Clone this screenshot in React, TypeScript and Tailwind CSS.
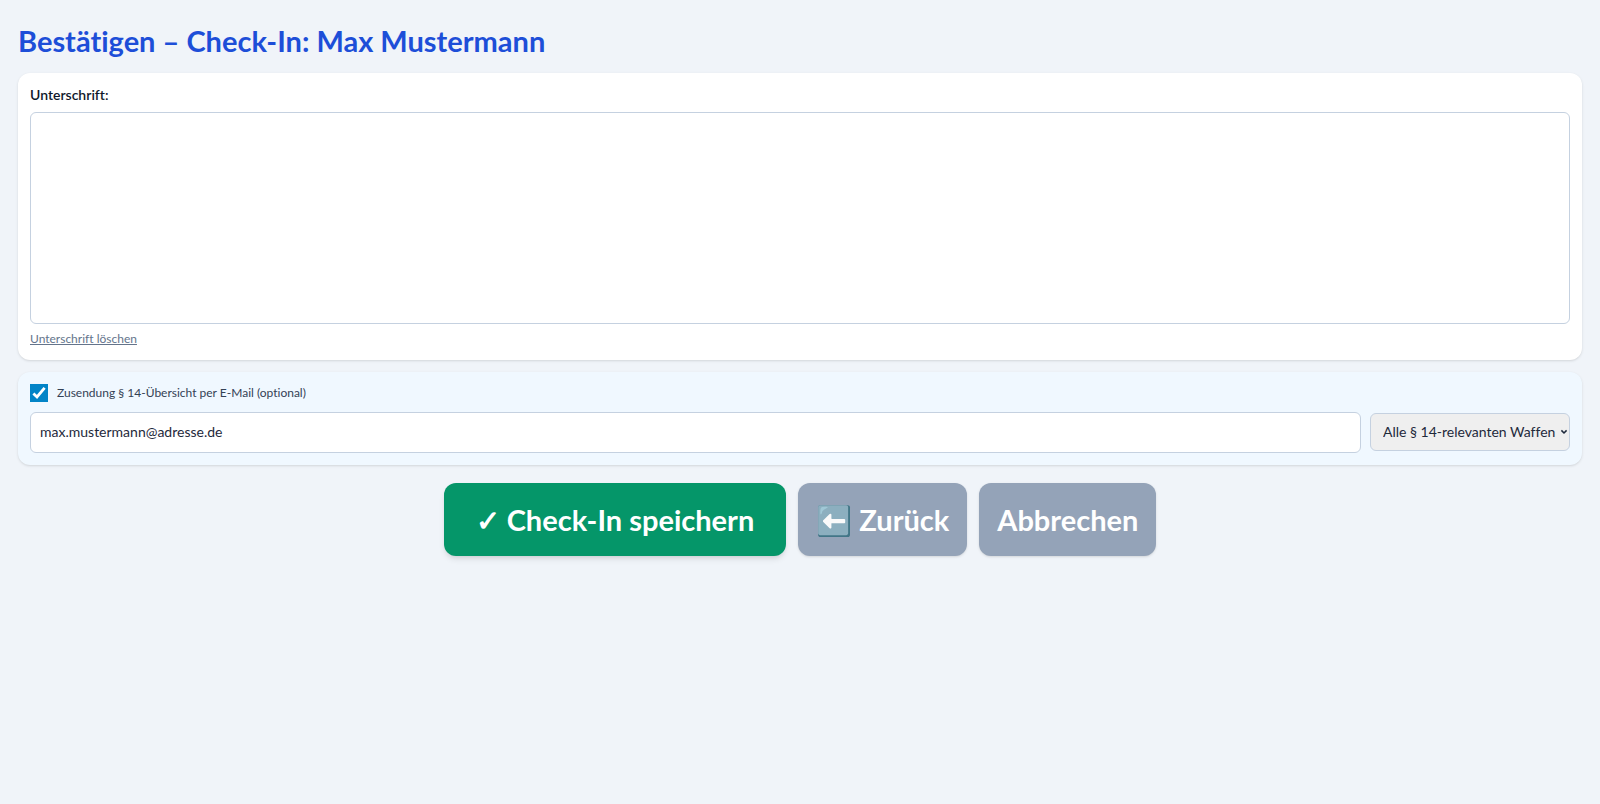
import { useEffect, useRef, useState } from "react";

export default function App() {
  const canvasRef = useRef<HTMLCanvasElement>(null);
  const drawing = useRef(false);
  const [sendMail, setSendMail] = useState(true);
  const [email, setEmail] = useState("max.mustermann@adresse.de");
  const [scope, setScope] = useState("relevant");

  useEffect(() => {
    document.title = "Check-In bestätigen";
    const canvas = canvasRef.current;
    if (!canvas) return;
    canvas.width = canvas.offsetWidth;
    canvas.height = canvas.offsetHeight;
  }, []);

  const startStroke = (e: React.PointerEvent<HTMLCanvasElement>) => {
    const ctx = canvasRef.current?.getContext("2d");
    if (!ctx) return;
    drawing.current = true;
    ctx.lineWidth = 2;
    ctx.beginPath();
    ctx.moveTo(e.nativeEvent.offsetX, e.nativeEvent.offsetY);
  };

  const moveStroke = (e: React.PointerEvent<HTMLCanvasElement>) => {
    const ctx = canvasRef.current?.getContext("2d");
    if (!ctx || !drawing.current) return;
    ctx.lineTo(e.nativeEvent.offsetX, e.nativeEvent.offsetY);
    ctx.stroke();
  };

  const endStroke = () => {
    drawing.current = false;
  };

  const clearSignature = () => {
    const canvas = canvasRef.current;
    canvas?.getContext("2d")?.clearRect(0, 0, canvas.width, canvas.height);
  };

  return (
    <main className="min-h-screen bg-[#f0f4f9] p-[18px] font-['Lato','Noto_Sans',sans-serif] text-[#0f172a] [font-variant-ligatures:none]">
      <h1 className="mb-2.5 text-[29px] leading-[45px] font-bold text-[#1d4ed8]">
        Bestätigen – Check-In: Max Mustermann
      </h1>

      <section className="mb-3 rounded-xl bg-white p-3 shadow-sm">
        <h2 className="mb-2 text-sm leading-[19px] font-semibold">Unterschrift:</h2>
        <canvas
          ref={canvasRef}
          aria-label="Unterschrift"
          onPointerDown={startStroke}
          onPointerMove={moveStroke}
          onPointerUp={endStroke}
          onPointerLeave={endStroke}
          className="block h-[212px] w-full touch-none rounded-md border border-[#c5d1e0] bg-white"
        />
        <button
          type="button"
          onClick={clearSignature}
          className="mt-1.5 block cursor-pointer text-xs leading-[18px] text-[#64748b] underline"
        >
          Unterschrift löschen
        </button>
      </section>

      <section className="mb-[18px] rounded-xl bg-[#f0f8ff] p-3 shadow-sm">
        <label className="mb-2.5 flex items-center gap-[9px] text-xs leading-[18px] text-[#334155]">
          <span className="relative size-[18px]">
            <input
              type="checkbox"
              checked={sendMail}
              onChange={(e) => setSendMail(e.target.checked)}
              className="block size-[18px] appearance-none border border-[#0284c7] bg-white checked:bg-[#0284c7]"
            />
            {sendMail && (
              <svg
                viewBox="0 0 18 18"
                className="pointer-events-none absolute inset-0 size-[18px]"
                fill="none"
                stroke="#fff"
                strokeWidth="2.8"
                aria-hidden
              >
                <path d="M3.4 9.4 7 13 14.6 3.8" />
              </svg>
            )}
          </span>
          Zusendung § 14-Übersicht per E-Mail (optional)
        </label>
        <div className="flex items-center gap-[9px]">
          <input
            type="email"
            aria-label="E-Mail-Adresse"
            value={email}
            onChange={(e) => setEmail(e.target.value)}
            className="h-[41px] min-w-0 flex-1 rounded-md border border-[#c5d1e0] bg-white px-[9px] pb-0.5 text-sm text-[#1e293b]"
          />
          <div className="relative mb-px w-[200px]">
            <select
              aria-label="Umfang der Übersicht"
              value={scope}
              onChange={(e) => setScope(e.target.value)}
              className="block h-[38px] w-full appearance-none rounded-md border border-[#c5d1e0] bg-[#efefef] px-3 text-sm text-[#1e293b]"
            >
              <option value="relevant">Alle § 14-relevanten Waffen</option>
            </select>
            <svg
              viewBox="0 0 8 8"
              className="pointer-events-none absolute top-[15px] right-0.5 size-2"
              fill="none"
              stroke="#1e293b"
              strokeWidth="1.5"
              aria-hidden
            >
              <path d="M1.4 2.4 4 5 6.6 2.4" />
            </svg>
          </div>
        </div>
      </section>

      <div className="flex flex-wrap justify-center gap-3 text-[29px] leading-[37px] font-bold text-white">
        <button type="button" className="rounded-xl bg-[#059669] px-8 py-[18px] shadow-md">
          ✓ Check-In speichern
        </button>
        <button type="button" className="rounded-xl bg-[#94a3b8] px-[18px] py-[18px] shadow-sm">
          ⬅️ Zurück
        </button>
        <button type="button" className="rounded-xl bg-[#94a3b8] px-[18px] py-[18px] shadow-sm">
          Abbrechen
        </button>
      </div>
    </main>
  );
}
